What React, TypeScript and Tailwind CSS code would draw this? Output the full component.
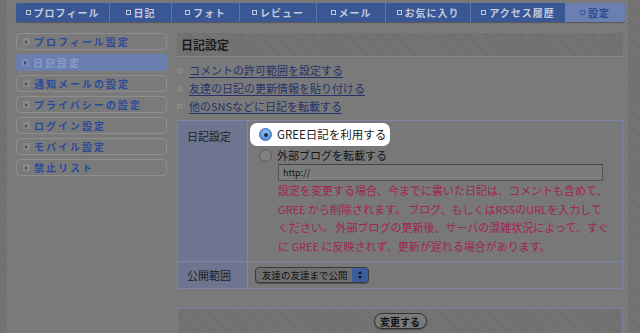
import React from "react";

const tabs = [
  { label: "プロフィール", w: "w-[93px]" },
  { label: "日記", w: "w-[62px]" },
  { label: "フォト", w: "w-[68px]" },
  { label: "レビュー", w: "w-[77px]" },
  { label: "メール", w: "w-[69px]" },
  { label: "お気に入り", w: "w-[85px]" },
  { label: "アクセス履歴", w: "w-[95px]" },
];

const menu = [
  "プロフィール設定",
  "日記設定",
  "通知メールの設定",
  "プライバシーの設定",
  "ログイン設定",
  "モバイル設定",
  "禁止リスト",
];

const links = [
  "コメントの許可範囲を設定する",
  "友達の日記の更新情報を貼り付ける",
  "他のSNSなどに日記を転載する",
];

const stripes =
  "bg-[repeating-linear-gradient(45deg,#6c6c6c_0px,#6c6c6c_1px,#757575_1px,#757575_3px)]";

function MenuIcon({ active }: { active?: boolean }) {
  return (
    <span
      className={
        "w-[7px] h-[7px] border flex items-center justify-center " +
        (active ? "border-[#7f8fb8] bg-[#7888b4]" : "border-[#888] bg-[#8a8a8a]")
      }
    >
      <span className="w-0 h-0 border-t-[2px] border-b-[2px] border-l-[3px] border-t-transparent border-b-transparent border-l-[#3c4c80]" />
    </span>
  );
}

export default function App() {
  return (
    <div
      className={`w-[640px] h-[333px] overflow-hidden ${stripes}`}
      style={{ fontFamily: '"Noto Sans CJK JP", "Liberation Sans", sans-serif' }}
    >
      <div className="ml-[7px] w-[621px] h-full bg-[#7a7a7a] pl-[9px] pt-[3px]">
        {/* top nav */}
        <div className="flex w-[609px] h-[19px] bg-[#3a5795] rounded-[2px] shadow-[0_1px_1px_rgba(0,0,0,0.3)]">
          {tabs.map((t, i) => (
            <div
              key={t.label}
              className={`${t.w} h-full flex items-center justify-center gap-[3px] text-[10px] tracking-[1px] text-[#c3cadc] font-bold ${
                i > 0 ? "border-l border-[#6377a6]" : ""
              }`}
            >
              <span className="w-[5px] h-[5px] border border-[#c3cadc]" />
              {t.label}
            </div>
          ))}
          <div className="w-[60px] h-full flex items-center justify-center gap-[3px] text-[10px] tracking-[1px] font-bold text-[#2b4a96] bg-[#6b80b0] rounded-r-[2px]">
            <span className="w-[5px] h-[5px] border border-[#3d5a9c]" />
            設定
          </div>
        </div>

        <div className="flex gap-[10px] mt-[11px]">
          {/* sidebar */}
          <div className="w-[151px] flex flex-col gap-[4px]">
            {menu.map((m, i) => {
              const active = i === 1;
              return (
                <div
                  key={m}
                  className={
                    "h-[17px] rounded-[4px] flex items-center gap-[4px] pl-[6px] text-[10px] font-bold tracking-[2px] " +
                    (active
                      ? "bg-[#6a7eb0] text-[#8a9ccc]"
                      : "border border-[#8e8e8e] text-[#2b4a9c]")
                  }
                >
                  <MenuIcon active={active} />
                  {m}
                </div>
              );
            })}
          </div>

          {/* main */}
          <div className="w-[446px]">
            <div
              className={`h-[24px] flex items-center pl-[4px] text-[12px] font-bold text-[#1c1c1c] border-b border-[#8a8a8a] ${stripes}`}
            >
              日記設定
            </div>
            <div className="mt-[4px] flex flex-col">
              {links.map((l) => (
                <div key={l} className="h-[18px] flex items-center gap-[7px] text-[11px]">
                  <span className="w-[5px] h-[5px] border border-[#8c8c8c] bg-[#7e7e7e]" />
                  <span className="text-[#26326a] underline underline-offset-2">{l}</span>
                </div>
              ))}
            </div>

            {/* table */}
            <div className="mt-[5px] border border-[#7e86a6]">
              <div className="flex border-b border-[#7e86a6]">
                <div className="w-[70px] bg-[#6e7590] pl-[9px] pt-[7px] text-[11px] text-[#1e1e1e] border-r border-[#7e86a6]">
                  日記設定
                </div>
                <div className="flex-1 bg-[#787878] pt-[2px] pb-[6px]">
                  <div className="ml-[2px] w-[140px] h-[23px] bg-white rounded-[7px] flex items-center pl-[9px] gap-[5px] text-[11.5px] text-[#222]">
                    <span className="w-[13px] h-[13px] rounded-full bg-[radial-gradient(circle_at_50%_35%,#9cc4f2,#3a7bd5)] border border-[#3e6aa8] flex items-center justify-center">
                      <span className="w-[4px] h-[4px] rounded-full bg-[#1a2a44]" />
                    </span>
                    GREE日記を利用する
                  </div>
                  <div className="h-[18px] flex items-center pl-[11px] gap-[5px] text-[11px] text-[#151515]">
                    <span className="w-[13px] h-[13px] rounded-full bg-[#7f7f7f] border border-[#5a5a5a]" />
                    外部ブログを転載する
                  </div>
                  <div className="ml-[30px] w-[325px] h-[17px] bg-[#7c7c7c] border border-[#555] border-t-[#444] flex items-center pl-[4px] text-[9px] text-[#111]">
                    http://
                  </div>
                  <div className="ml-[30px] text-[11px] leading-[18.5px] text-[#a42352] whitespace-nowrap">
                    設定を変更する場合、今までに書いた日記は、コメントも含めて、
                    <br />
                    GREE から削除されます。 ブログ、もしくはRSSのURLを入力して
                    <br />
                    ください。 外部ブログの更新後、サーバの混雑状況によって、すぐ
                    <br />
                    に GREE に反映されず、更新が遅れる場合があります。
                  </div>
                </div>
              </div>
              <div className="flex h-[26px]">
                <div className="w-[70px] bg-[#6e7590] pl-[9px] flex items-center text-[11px] text-[#1e1e1e] border-r border-[#7e86a6]">
                  公開範囲
                </div>
                <div className="flex-1 bg-[#787878] flex items-center pl-[7px]">
                  <div className="w-[114px] h-[16px] rounded-[4px] border border-[#3a3a3a] bg-[#6f6f6f] flex items-center overflow-hidden shadow-[0_1px_1px_rgba(0,0,0,0.3)]">
                    <span className="flex-1 pl-[6px] text-[9.5px] text-[#111]">友達の友達まで公開</span>
                    <span className="w-[16px] h-full bg-[#3b5d9e] flex flex-col items-center justify-center gap-[2px]">
                      <span className="w-0 h-0 border-l-[2px] border-r-[2px] border-b-[3px] border-l-transparent border-r-transparent border-b-[#111]" />
                      <span className="w-0 h-0 border-l-[2px] border-r-[2px] border-t-[3px] border-l-transparent border-r-transparent border-t-[#111]" />
                    </span>
                  </div>
                </div>
              </div>
            </div>

            {/* submit bar */}
            <div className={`mt-[19px] h-[40px] border border-[#7a82a0] flex justify-center pt-[4px] ${stripes}`}>
              <div
                className="w-[53px] h-[16px] rounded-full border border-[#333] bg-[#7a7a7a] flex items-center justify-center text-[10px] font-bold text-[#111] shadow-[0_1px_1px_rgba(0,0,0,0.3)]"
                style={{ fontFamily: '"Noto Sans CJK JP", "Liberation Serif", serif' }}
              >
                変更する
              </div>
            </div>
          </div>
        </div>
      </div>
    </div>
  );
}
